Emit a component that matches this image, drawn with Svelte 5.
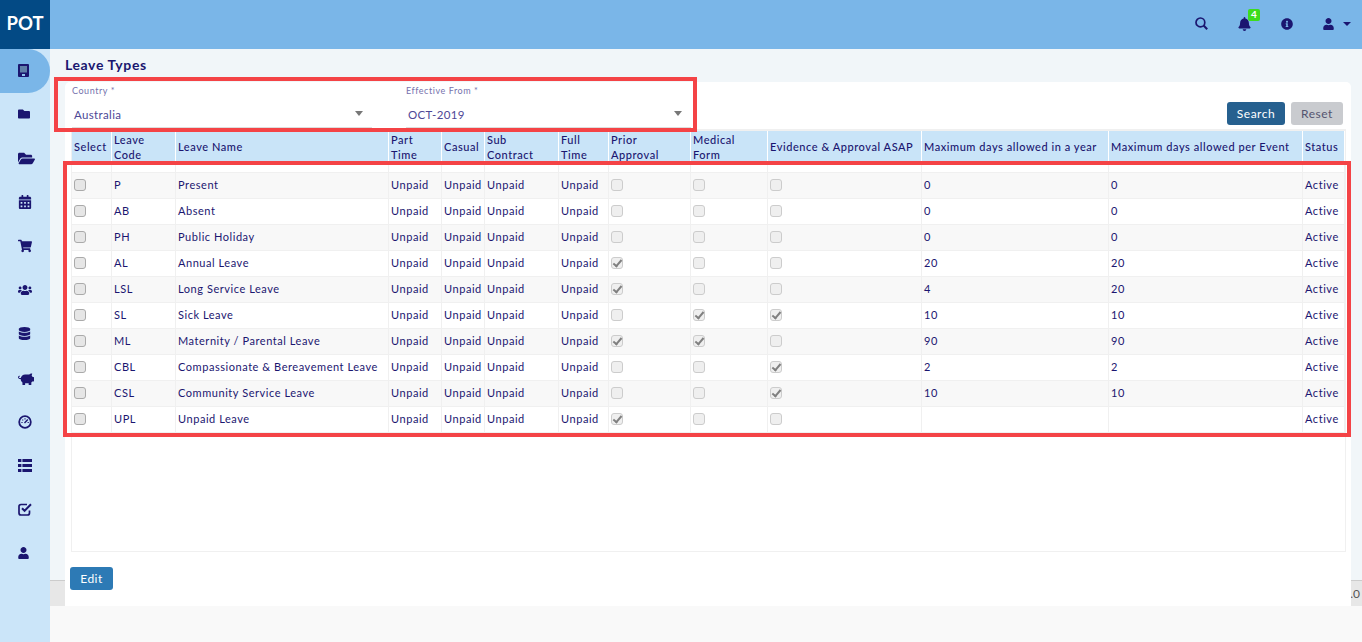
<script>
  const rows = [
    ['P','Present',0,0,0,'0','0'],
    ['AB','Absent',0,0,0,'0','0'],
    ['PH','Public Holiday',0,0,0,'0','0'],
    ['AL','Annual Leave',1,0,0,'20','20'],
    ['LSL','Long Service Leave',1,0,0,'4','20'],
    ['SL','Sick Leave',0,1,1,'10','10'],
    ['ML','Maternity / Parental Leave',1,1,0,'90','90'],
    ['CBL','Compassionate & Bereavement Leave',0,0,1,'2','2'],
    ['CSL','Community Service Leave',0,0,1,'10','10'],
    ['UPL','Unpaid Leave',1,0,0,'','']
  ];
  const cols = [40,64,213,53,43,74,50,82,77,154,187,194,42];
  const P = {
    folder:['0 0 512 512','M464 128H272l-64-64H48C21.49 64 0 85.49 0 112v288c0 26.51 21.49 48 48 48h416c26.51 0 48-21.49 48-48V176c0-26.51-21.49-48-48-48z'],
    open:['0 0 576 512','M572.694 292.093L500.27 416.248A63.997 63.997 0 0 1 444.989 448H45.025c-18.523 0-30.064-20.093-20.731-36.093l72.424-124.155A64 64 0 0 1 152 256h399.964c18.523 0 30.064 20.093 20.73 36.093zM152 224h328v-48c0-26.51-21.49-48-48-48H272l-64-64H48C21.49 64 0 85.49 0 112v278.046l69.077-118.418C86.214 242.25 117.989 224 152 224z'],
    cal:['0 0 448 512','M0 464c0 26.5 21.5 48 48 48h352c26.5 0 48-21.5 48-48V192H0v272zm320-196c0-6.6 5.4-12 12-12h40c6.6 0 12 5.4 12 12v40c0 6.6-5.4 12-12 12h-40c-6.6 0-12-5.4-12-12v-40zm0 128c0-6.6 5.4-12 12-12h40c6.6 0 12 5.4 12 12v40c0 6.6-5.4 12-12 12h-40c-6.6 0-12-5.4-12-12v-40zM192 268c0-6.6 5.4-12 12-12h40c6.6 0 12 5.4 12 12v40c0 6.6-5.4 12-12 12h-40c-6.6 0-12-5.4-12-12v-40zm0 128c0-6.6 5.4-12 12-12h40c6.6 0 12 5.4 12 12v40c0 6.6-5.4 12-12 12h-40c-6.6 0-12-5.4-12-12v-40zM64 268c0-6.6 5.4-12 12-12h40c6.6 0 12 5.4 12 12v40c0 6.6-5.4 12-12 12H76c-6.6 0-12-5.4-12-12v-40zm0 128c0-6.6 5.4-12 12-12h40c6.6 0 12 5.4 12 12v40c0 6.6-5.4 12-12 12H76c-6.6 0-12-5.4-12-12v-40zM400 64h-48V16c0-8.8-7.2-16-16-16h-32c-8.8 0-16 7.2-16 16v48H160V16c0-8.8-7.2-16-16-16h-32c-8.8 0-16 7.2-16 16v48H48C21.5 64 0 85.5 0 112v48h448v-48c0-26.5-21.5-48-48-48z'],
    cart:['0 0 576 512','M528.12 301.319l47.273-208C578.806 78.301 567.391 64 551.99 64H159.208l-9.166-44.81C147.758 8.021 137.93 0 126.529 0H24C10.745 0 0 10.745 0 24v16c0 13.255 10.745 24 24 24h69.883l70.248 343.435C147.325 417.1 136 435.222 136 456c0 30.928 25.072 56 56 56s56-25.072 56-56c0-15.674-6.447-29.835-16.824-40h209.647C430.447 426.165 424 440.326 424 456c0 30.928 25.072 56 56 56s56-25.072 56-56c0-22.172-12.888-41.332-31.579-50.405l5.517-24.276c3.413-15.018-8.002-29.319-23.403-29.319H218.117l-6.545-32h293.145c11.206 0 20.92-7.754 23.403-18.681z'],
    users:['0 0 640 512','M96 224c35.3 0 64-28.7 64-64s-28.7-64-64-64-64 28.7-64 64 28.7 64 64 64zm448 0c35.3 0 64-28.7 64-64s-28.7-64-64-64-64 28.7-64 64 28.7 64 64 64zm32 32h-64c-17.6 0-33.5 7.1-45.1 18.6 40.3 22.1 68.9 62 75.1 109.4h66c17.7 0 32-14.3 32-32v-32c0-35.3-28.7-64-64-64zm-256 0c61.9 0 112-50.1 112-112S381.9 32 320 32 208 82.1 208 144s50.1 112 112 112zm76.8 32h-8.3c-20.8 10-43.9 16-68.5 16s-47.6-6-68.5-16h-8.3C179.6 288 128 339.6 128 403.2V432c0 26.5 21.5 48 48 48h288c26.5 0 48-21.5 48-48v-28.8c0-63.6-51.6-115.2-115.2-115.2zm-223.7-13.4C161.5 263.1 145.6 256 128 256H64c-35.3 0-64 28.7-64 64v32c0 17.7 14.3 32 32 32h65.9c6.3-47.4 34.9-87.3 75.2-109.4z'],
    db:['0 0 448 512','M448 73.143v45.714C448 159.143 347.667 192 224 192S0 159.143 0 118.857V73.143C0 32.857 100.333 0 224 0s224 32.857 224 73.143zM448 176v102.857C448 319.143 347.667 352 224 352S0 319.143 0 278.857V176c48.125 33.143 136.208 48.572 224 48.572S399.874 209.143 448 176zm0 160v102.857C448 479.143 347.667 512 224 512S0 479.143 0 438.857V336c48.125 33.143 136.208 48.572 224 48.572S399.874 369.143 448 336z'],
    piggy:['0 0 576 512','M560 224h-29.5c-8.8-20-21.6-37.7-37.4-52.5L512 96h-32c-29.4 0-55.4 13.5-73 34.3-7.6-1.1-15.1-2.3-23-2.3H256c-77.4 0-141.9 55-156.8 128H56c-14.8 0-26.5-13.5-23.5-28.8C34.7 215.8 45.4 208 57 208h1c3.3 0 6-2.7 6-6v-20c0-3.3-2.7-6-6-6-28.5 0-53.9 20.4-57.5 48.6C-3.9 258.8 22.7 288 56 288h40c0 52.2 25.4 98.1 64 127.3V496c0 8.8 7.2 16 16 16h64c8.8 0 16-7.2 16-16v-48h128v48c0 8.8 7.2 16 16 16h64c8.8 0 16-7.2 16-16v-80.9c11.8-8.9 22.3-19.4 31.3-31.1H560c8.8 0 16-7.2 16-16V240c0-8.8-7.2-16-16-16z'],
    user:['0 0 448 512','M224 256c70.7 0 128-57.3 128-128S294.7 0 224 0 96 57.3 96 128s57.3 128 128 128zm89.6 32h-16.7c-22.2 10.2-46.9 16-72.9 16s-50.6-5.8-72.9-16h-16.7C60.2 288 0 348.2 0 422.4V464c0 26.5 21.5 48 48 48h352c26.5 0 48-21.5 48-48v-41.6c0-74.2-60.2-134.4-134.4-134.4z'],
    bell:['0 0 448 512','M224 512c35.32 0 63.97-28.65 63.97-64H160.03c0 35.35 28.65 64 63.97 64zm215.39-149.71c-19.32-20.76-55.47-51.99-55.47-154.29 0-77.7-54.48-139.9-127.94-155.16V32c0-17.67-14.32-32-31.98-32s-31.98 14.33-31.98 32v20.84C118.56 68.1 64.08 130.3 64.08 208c0 102.3-36.15 133.53-55.47 154.29-6 6.45-8.66 14.16-8.61 21.71.11 16.4 12.98 32 32.1 32h383.8c19.12 0 32-15.6 32.1-32 .05-7.55-2.61-15.27-8.61-21.71z'],
    info:['0 0 512 512','M256 8C119.043 8 8 119.083 8 256c0 136.997 111.043 248 248 248s248-111.003 248-248C504 119.083 392.957 8 256 8zm0 110c23.196 0 42 18.804 42 42s-18.804 42-42 42-42-18.804-42-42 18.804-42 42-42zm56 254c0 6.627-5.373 12-12 12h-88c-6.627 0-12-5.373-12-12v-24c0-6.627 5.373-12 12-12h12v-64h-12c-6.627 0-12-5.373-12-12v-24c0-6.627 5.373-12 12-12h64c6.627 0 12 5.373 12 12v100h12c6.627 0 12 5.373 12 12v24z']
  };
  const side = [['folder',12],['open',17],['cal',14],['cart',14],['users',14],['db',13],['piggy',16]];
</script>

<div class="page">
  <header class="top">
    <div class="logo">POT</div>
    <div class="tools">
      <svg class="t-search" viewBox="0 0 13 13">
        <circle class="ring" cx="5.4" cy="5.4" r="4.4" stroke-width="1.7" />
        <path class="line" d="M8.6 8.6 L12.2 12.2" stroke-width="2.1" />
      </svg>
      <span class="bellwrap">
        <svg class="t-bell" viewBox={P.bell[0]}><path d={P.bell[1]} /></svg>
        <span class="badge">4</span>
      </span>
      <svg class="t-info" viewBox={P.info[0]}><path d={P.info[1]} /></svg>
      <span class="userwrap">
        <svg class="t-user" viewBox={P.user[0]}><path d={P.user[1]} /></svg>
        <span class="caret"></span>
      </span>
    </div>
  </header>

  <div class="body">
    <nav class="side">
      <div class="item active">
        <svg class="ic" style="width:11px;height:13px" viewBox="0 0 11 13">
          <rect x="0" y="0" width="11" height="13" rx="1" fill="#1b1670" />
          <rect x="2" y="2" width="7" height="6.5" fill="#5f7fa8" />
          <rect x="4" y="10" width="3" height="2" fill="#8fc4ee" />
        </svg>
      </div>
      {#each side as [k, w]}
        <div class="item"><svg class="ic" style="width:{w}px;height:{w}px" viewBox={P[k][0]}><path d={P[k][1]} /></svg></div>
      {/each}
      <div class="item">
        <svg class="ic" style="width:14px;height:14px" viewBox="0 0 14 14">
          <circle class="ring" cx="7" cy="7" r="5.8" stroke-width="1.8" />
          <path class="line" d="M6.5 8 L9.8 4.6" stroke-width="1.4" />
          <path class="line" d="M3.4 7.5h1.2M7 3.2v1.2M4.4 4.6l.8.8M9.6 7.5h1.2" stroke-width="1.1" />
        </svg>
      </div>
      <div class="item">
        <svg class="ic" style="width:14px;height:13px" viewBox="0 0 14 13">
          <rect class="solid" x="0" y="0" width="3.4" height="3" />
          <rect class="solid" x="4.4" y="0" width="9.6" height="3" />
          <rect class="solid" x="0" y="5" width="3.4" height="3" />
          <rect class="solid" x="4.4" y="5" width="9.6" height="3" />
          <rect class="solid" x="0" y="10" width="3.4" height="3" />
          <rect class="solid" x="4.4" y="10" width="9.6" height="3" />
        </svg>
      </div>
      <div class="item">
        <svg class="ic" style="width:14px;height:14px" viewBox="0 0 14 14">
          <path class="line" d="M11.5 8.5v2.5a2 2 0 0 1-2 2H3a2 2 0 0 1-2-2V4.5a2 2 0 0 1 2-2h6" stroke-width="1.7" />
          <path class="line" d="M4 6.2 L6.6 8.8 L13 2.2" stroke-width="2" />
        </svg>
      </div>
      <div class="item"><svg class="ic" style="width:11px;height:12px" viewBox={P.user[0]}><path d={P.user[1]} /></svg></div>
    </nav>

    <div class="right">
      <main class="main">
        <div class="footer"><span>.0</span></div>
        <div class="inner">
          <h1>Leave Types</h1>
          <section class="card">
            <div class="filters">
              <div class="field f1">
                <span class="lab">Country *</span>
                <div class="sel"><span>Australia</span><i class="arrow"></i></div>
              </div>
              <div class="field f2">
                <span class="lab">Effective From *</span>
                <div class="sel"><span>OCT-2019</span><i class="arrow"></i></div>
              </div>
              <div class="actions">
                <button class="btn search">Search</button>
                <button class="btn reset">Reset</button>
              </div>
            </div>

            <div class="tablebox">
              <table>
                <colgroup>
                  {#each cols as c}<col style="width:{c}px" />{/each}
                </colgroup>
                <thead>
                  <tr>
                    <th>Select</th><th>Leave Code</th><th>Leave Name</th><th>Part Time</th><th>Casual</th>
                    <th>Sub Contract</th><th>Full Time</th><th>Prior Approval</th><th>Medical Form</th>
                    <th>Evidence &amp; Approval ASAP</th><th>Maximum days allowed in a year</th>
                    <th>Maximum days allowed per Event</th><th>Status</th>
                  </tr>
                </thead>
                <tbody>
                  <tr class="spacer">{#each cols as c}<td></td>{/each}</tr>
                  {#each rows as r}
                    <tr>
                      <td><input type="checkbox" class="cb main-cb" /></td>
                      <td>{r[0]}</td>
                      <td>{r[1]}</td>
                      <td>Unpaid</td><td>Unpaid</td><td>Unpaid</td><td>Unpaid</td>
                      <td><input type="checkbox" class="cb" disabled checked={!!r[2]} /></td>
                      <td><input type="checkbox" class="cb" disabled checked={!!r[3]} /></td>
                      <td><input type="checkbox" class="cb" disabled checked={!!r[4]} /></td>
                      <td>{r[5]}</td>
                      <td>{r[6]}</td>
                      <td>Active</td>
                    </tr>
                  {/each}
                </tbody>
              </table>
            </div>
            <button class="btn edit">Edit</button>
          </section>
        </div>
      </main>
      <div class="bottom"></div>
    </div>
  </div>

  <div class="mark m1"></div>
  <div class="mark m2"></div>
</div>

<style>
  :global(body) { margin: 0; overflow: hidden; background: #f9f9f9; }
  .page {
    position: relative;
    width: 1362px;
    height: 642px;
    overflow: hidden;
    font-family: Lato, "Liberation Sans", sans-serif;
    color: #1b1670;
    font-size: 11px;
    letter-spacing: 0.55px;
  }
  svg path, .solid { fill: #1b1670; }
  svg path.line { fill: none; stroke: #1b1670; }
  .ring { fill: none; stroke: #1b1670; }
  .top {
    height: 49px;
    background: #7ab6e8;
    display: flex;
    justify-content: space-between;
  }
  .logo {
    width: 50px;
    background: #034a85;
    color: #fff;
    font-weight: 700;
    font-size: 18.5px;
    letter-spacing: 0;
    display: flex;
    align-items: center;
    justify-content: center;
    padding-bottom: 3px;
    box-sizing: border-box;
  }
  .tools {
    display: flex;
    align-items: center;
    padding-right: 11px;
    height: 47px;
  }
  .t-search { width: 13px; height: 13px; margin-right: 30px; }
  .bellwrap { position: relative; display: flex; margin-right: 30px; }
  .t-bell { width: 13px; height: 14px; }
  .badge {
    position: absolute;
    left: 10px;
    top: -8px;
    width: 12px;
    height: 12px;
    border-radius: 2px;
    background: #3ddc1c;
    color: #fff;
    font-size: 10px;
    font-weight: 700;
    line-height: 11px;
    text-align: center;
    letter-spacing: 0;
  }
  .t-info { width: 12px; height: 12px; margin-right: 30px; }
  .userwrap { display: flex; align-items: center; gap: 9px; }
  .t-user { width: 11px; height: 12px; }
  .caret {
    width: 0; height: 0;
    border-left: 4px solid transparent;
    border-right: 4px solid transparent;
    border-top: 4px solid #1b1670;
  }
  .body { display: flex; height: 593px; }
  .side { width: 50px; background: #cbe5f9; flex: none; }
  .item {
    height: 43.9px;
    display: flex;
    align-items: center;
    padding: 0 0 1px 18px;
    box-sizing: border-box;
  }
  .item.active { background: #7ab6e8; border-radius: 0 22px 22px 0; }
  .ic { display: block; }
  .right { flex: 1; display: flex; flex-direction: column; }
  .main {
    height: 557px;
    background: #f1f6f9;
    display: grid;
    flex: none;
  }
  .main > * { grid-area: 1 / 1; }
  .footer {
    align-self: end;
    height: 26px;
    box-sizing: border-box;
    background: #e7e7e7;
    border-top: 1px solid #ccc;
    display: flex;
    justify-content: flex-end;
    align-items: center;
    padding-right: 2px;
    color: #555;
    font-size: 12px;
    letter-spacing: 0;
  }
  .inner { padding: 0 11px 0 15px; display: flex; flex-direction: column; min-width: 0; }
  h1 {
    margin: 0;
    height: 33px;
    line-height: 32px;
    font-size: 14px;
    font-weight: 700;
    letter-spacing: 0.6px;
  }
  .card {
    flex: 1;
    background: #fff;
    border-radius: 5px 5px 0 0;
    padding: 0 6px 0 5px;
    display: flex;
    flex-direction: column;
    align-items: flex-start;
  }
  .filters { display: flex; align-items: flex-start; height: 47px; width: 100%; flex: none; }
  .field { display: flex; flex-direction: column; margin-left: 2px; }
  .f1 { width: 300px; }
  .f2 { width: 285px; margin-left: 34px; }
  .lab { font-size: 9px; color: #7672ad; height: 17px; line-height: 17px; }
  .sel {
    height: 29px;
    padding: 2px 9px 0 2px;
    box-sizing: border-box;
    border-bottom: 1px solid #ddd;
    display: flex;
    align-items: center;
    justify-content: space-between;
    font-size: 11.5px;
    letter-spacing: 0.35px;
    color: #4d4795;
  }
  .arrow {
    width: 0; height: 0;
    border-left: 4px solid transparent;
    border-right: 4px solid transparent;
    border-top: 5px solid #777;
    margin-top: -2px;
  }
  .actions { margin-left: auto; display: flex; gap: 6px; padding-top: 20px; padding-right: 2px; }
  .btn {
    border: 0;
    border-radius: 3px;
    height: 23px;
    padding: 0;
    font: inherit;
    font-size: 12px;
    letter-spacing: 0.5px;
  }
  .search { width: 58px; background: #26608f; color: #fff; }
  .reset { width: 52px; background: #c9cbcf; color: #55556f; }
  .tablebox {
    width: 1275px;
    height: 423px;
    box-sizing: border-box;
    border: 1px solid #f0f0f0;
    border-top: 2px solid #f0f0f0;
    flex: none;
    margin-left: 1px;
  }
  .edit { width: 43px; background: #2d7ab5; color: #fff; margin-top: 15px; }
  table { border-collapse: separate; border-spacing: 0; table-layout: fixed; width: 1273px; }
  th {
    background: #c9e4f8;
    font-size: 11px;
    line-height: 15px;
    height: 31px;
    padding: 0 4px 0 2px;
    text-align: left;
    box-sizing: border-box;
    border-right: 1px solid #fff;
    font-weight: 500;
    overflow: hidden;
  }
  td {
    height: 26px;
    padding: 0 2px 2px;
    box-sizing: border-box;
    border-right: 1px solid #f0f0f0;
    border-bottom: 1px solid #f0f0f0;
    white-space: nowrap;
    overflow: hidden;
  }
  tbody tr:nth-child(even) td { background: #f8f8f8; }
  .spacer td { height: 11px; padding: 0; }
  tbody tr.spacer td { background: #fff; }
  .cb {
    appearance: none;
    -webkit-appearance: none;
    display: block;
    position: relative;
    box-sizing: border-box;
    width: 12px;
    height: 12px;
    margin: 1px 0 0;
    border: 1px solid #ccc;
    border-radius: 3px;
    background: #efefef;
  }
  .main-cb { border-color: #aaa; background: #e6e6e6; }
  .cb:checked::after {
    content: "";
    position: absolute;
    left: 3px;
    top: 0;
    width: 3px;
    height: 7px;
    border: solid #808080;
    border-width: 0 2px 2px 0;
    transform: rotate(40deg);
  }
  .bottom { flex: 1; background: #f9f9f9; }
  .mark { position: absolute; border: 4px solid #f44346; box-sizing: border-box; pointer-events: none; }
  .m1 { left: 54px; top: 77px; width: 643px; height: 55px; }
  .m2 { left: 63px; top: 161px; width: 1288px; height: 276px; }
</style>
